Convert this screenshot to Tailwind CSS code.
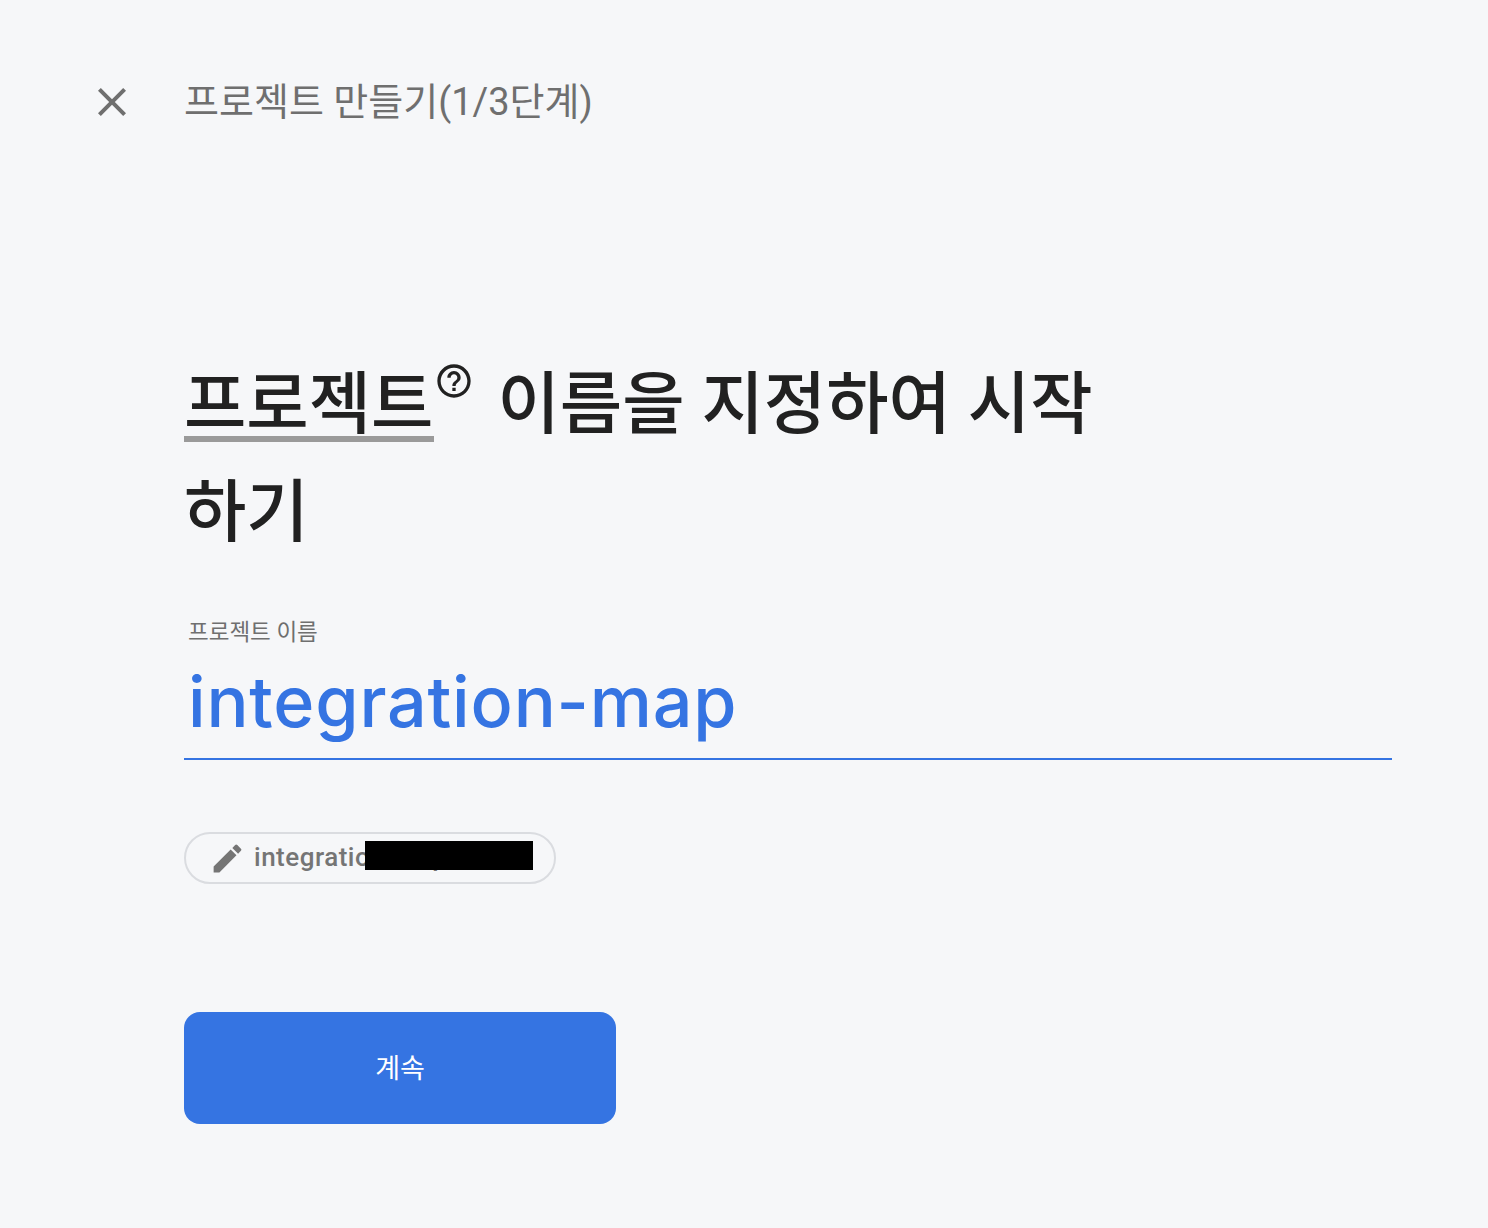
<!DOCTYPE html>
<html lang="ko">
  <head>
    <meta charset="UTF-8" />
    <meta name="viewport" content="width=device-width, initial-scale=1.0" />
    <script src="https://cdn.jsdelivr.net/npm/@tailwindcss/browser@4"></script>
    <title>프로젝트 만들기</title>
  </head>
  <body class="bg-[#f6f7f9] min-h-screen font-[Roboto,'Noto_Sans_CJK_KR',sans-serif]">
    <header class="flex items-center h-[204px] pl-[88px]">
      <button class="w-[48px] h-[48px] flex items-center justify-center text-[#6f6f6f]">
        <svg class="w-[48px] h-[48px]" viewBox="0 0 48 48" fill="currentColor">
          <path d="M38 12.83 35.17 10 24 21.17 12.83 10 10 12.83 21.17 24 10 35.17 12.83 38 24 26.83 35.17 38 38 35.17 26.83 24z" />
        </svg>
      </button>
      <p class="ml-[48px] text-[38px] leading-[48px] text-[#6f6f6f]">프로젝트 만들기(1/3단계)</p>
    </header>

    <main class="pl-[184px] pr-[96px] pt-[147px]">
      <h1 class="w-[960px] text-[67.8px] leading-[108px] font-medium text-[#212121]">
        <span class="inline-block leading-[62px] border-b-[6px] border-[#9a9a9a]">프로젝트</span><svg class="inline-block align-[27px] w-[40px] h-[40px] mr-[24px]" viewBox="0 0 24 24" fill="#212121"><path d="M11 18h2v-2h-2v2zm1-16C6.48 2 2 6.48 2 12s4.48 10 10 10 10-4.48 10-10S17.52 2 12 2zm0 18c-4.41 0-8-3.59-8-8s3.59-8 8-8 8 3.59 8 8-3.59 8-8 8zm0-14c-2.21 0-4 1.79-4 4h2c0-1.1.9-2 2-2s2 .9 2 2c0 2-3 1.75-3 5h2c0-2.25 3-2.5 3-5 0-2.21-1.79-4-4-4z" /></svg>이름을 지정하여 시작하기
      </h1>

      <div class="mt-[49px] border-b-2 border-[#3574e2] h-[144px]">
        <label class="block pl-[4px] text-[22.5px] leading-[32px] text-[#6f6f6f]">프로젝트 이름</label>
        <p class="pl-[4px] mt-[10px] text-[70px] leading-[88px] font-medium tracking-[0.8px] text-[#3574e2] font-[Inter,sans-serif]">integration-map</p>
      </div>

      <div class="mt-[72px] relative w-[372px] h-[52px] rounded-full border-2 border-[#dadce0] flex items-center pl-[23px] text-[#757575]">
        <svg class="w-[37px] h-[37px]" viewBox="0 0 24 24" fill="currentColor">
          <path d="M3 17.25V21h3.75L17.81 9.94l-3.75-3.75L3 17.25zM20.71 7.04a1 1 0 0 0 0-1.41l-2.34-2.34a1 1 0 0 0-1.41 0l-1.83 1.83 3.75 3.75 1.83-1.83z" />
        </svg>
        <span class="ml-[8px] text-[26px] leading-[36px] mb-[2px] font-medium tracking-[0.5px] whitespace-nowrap">integration-map</span>
        <div class="absolute left-[179px] top-[7px] w-[168px] h-[29px] bg-black"></div>
      </div>

      <button class="mt-[128px] block w-[432px] h-[112px] pt-[3px] rounded-[16px] bg-[#3574e2] text-white text-[27px]">계속</button>
    </main>
  </body>
</html>
